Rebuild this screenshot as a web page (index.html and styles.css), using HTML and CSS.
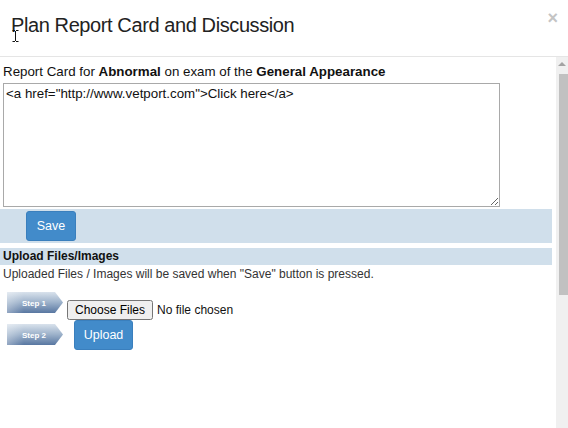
FILE: index.html
```html
<!DOCTYPE html>
<html>
<head>
<meta charset="utf-8">
<link rel="stylesheet" href="styles.css">
</head>
<body>
<div class="modal">
  <div class="modal-header">
    <h4 class="modal-title">Plan Report Card and Discussion</h4>
    <span class="close">×</span>
  </div>
  <div class="modal-body">
    <div class="content">
      <div class="label">Report Card for <b>Abnormal</b> on exam of the <b>General Appearance</b></div>
      <textarea class="report">&lt;a href="http://www.vetport.com"&gt;Click here&lt;/a&gt;</textarea>
      <div class="save-bar"><button class="btn btn-save">Save</button></div>
      <div class="section-head">Upload Files/Images</div>
      <div class="note">Uploaded Files / Images will be saved when "Save" button is pressed.</div>
      <div class="step-row row1">
        <svg class="step" width="56" height="21" viewBox="0 0 56 21">
          <defs>
            <linearGradient id="g1" x1="0" y1="0" x2="0" y2="1">
              <stop offset="0" stop-color="#d9e2ec"/>
              <stop offset="0.5" stop-color="#9cb1ca"/>
              <stop offset="1" stop-color="#5877a1"/>
            </linearGradient>
            <linearGradient id="h1" x1="0" y1="0" x2="1" y2="0">
              <stop offset="0" stop-color="#ffffff" stop-opacity="0.35"/>
              <stop offset="0.3" stop-color="#ffffff" stop-opacity="0"/>
            </linearGradient>
          </defs>
          <polygon points="0,0 48,0 56,10.5 48,21 0,21" fill="url(#g1)"/>
          <polygon points="0,0 48,0 56,10.5 48,21 0,21" fill="url(#h1)"/>
          <text x="27" y="13.5" class="step-text">Step 1</text>
        </svg>
        <input class="file" type="file" multiple>
      </div>
      <div class="step-row row2">
        <svg class="step" width="56" height="21" viewBox="0 0 56 21">
          <polygon points="0,0 48,0 56,10.5 48,21 0,21" fill="url(#g1)"/>
          <polygon points="0,0 48,0 56,10.5 48,21 0,21" fill="url(#h1)"/>
          <text x="27" y="13.5" class="step-text">Step 2</text>
        </svg>
        <button class="btn btn-upload">Upload</button>
      </div>
    </div>
    <div class="scrollbar">
      <div class="sb-arrow"></div>
      <div class="sb-thumb"></div>
    </div>
  </div>
  <svg class="cursor" width="7" height="12" viewBox="0 0 7 12">
    <path d="M0.5 0.5h2.5M4 0.5h2.5M3.5 1v10M0.5 11.5h2.5M4 11.5h2.5" stroke="#111" stroke-width="1" fill="none"/>
  </svg>
</div>
</body>
</html>
```

FILE: styles.css
```css
html, body {
  margin: 0;
  padding: 0;
  background: #fff;
}
body {
  font-family: "Liberation Sans", Arial, sans-serif;
  font-size: 12px;
  color: #222;
}
.modal {
  position: relative;
  width: 568px;
  height: 428px;
  overflow: hidden;
}
.modal-header {
  height: 56px;
  border-bottom: 1px solid #e5e5e5;
  display: flex;
  align-items: flex-start;
  justify-content: space-between;
}
.modal-title {
  margin: 0;
  padding: 13px 0 0 11px;
  font-size: 20px;
  font-weight: normal;
  letter-spacing: -0.4px;
  line-height: 24px;
  color: #222;
}
.close {
  font-size: 18px;
  font-weight: bold;
  line-height: 18px;
  color: #c4c4c4;
  margin: 9px 10px 0 0;
}
.modal-body {
  display: flex;
  height: 371px;
}
.content {
  width: 552px;
  margin-right: 4px;
}
.label {
  padding: 7px 0 0 3px;
  font-size: 13.3333px;
  line-height: 16px;
  height: 16px;
  color: #111;
}
.report {
  display: block;
  box-sizing: border-box;
  margin: 3px 0 0 3px;
  width: 497px;
  height: 124px;
  border: 1px solid #a9a9a9;
  padding: 2px;
  font-family: "Liberation Sans", Arial, sans-serif;
  font-size: 13.3333px;
  line-height: 16px;
  color: #111;
  resize: both;
}
.save-bar {
  margin-top: 2px;
  height: 34px;
  box-sizing: border-box;
  padding: 2px 0 0 26px;
  background: #d0dfeb;
}
.btn {
  border: 1px solid #3a7fbd;
  border-radius: 3px;
  background: #428bca;
  color: #fff;
  font-family: "Liberation Sans", Arial, sans-serif;
  font-size: 12.5px;
  padding: 0;
}
.btn-save {
  width: 50px;
  height: 30px;
}
.section-head {
  margin-top: 5px;
  height: 17px;
  line-height: 17px;
  padding-left: 3px;
  background: #d0dfeb;
  font-weight: bold;
  color: #111;
}
.note {
  margin-top: 2px;
  padding-left: 3px;
  line-height: 14px;
  color: #333;
}
.step-row {
  display: flex;
}
.row1 {
  margin-top: 11px;
  height: 28px;
}
.row1 .step {
  margin-left: 7px;
  align-self: flex-start;
}
.file {
  align-self: flex-end;
  margin-left: 4px;
  font-family: "Liberation Sans", Arial, sans-serif;
  font-size: 12px;
  color: #111;
}
.row2 {
  height: 30px;
}
.row2 .step {
  margin: 4px 0 0 7px;
}
.btn-upload {
  margin-left: 11px;
  width: 59px;
  height: 30px;
}
.step-text {
  font-family: "Liberation Sans", Arial, sans-serif;
  font-size: 8px;
  font-weight: bold;
  fill: #fff;
  text-anchor: middle;
}
.scrollbar {
  width: 12px;
  background: #f0f0f0;
  display: flex;
  flex-direction: column;
  align-items: flex-end;
}
.sb-arrow {
  width: 0;
  height: 0;
  margin: 5px 2px 0 0;
  border-left: 4px solid transparent;
  border-right: 4px solid transparent;
  border-bottom: 4px solid #a3a3a3;
}
.sb-thumb {
  margin-top: 8px;
  width: 9px;
  height: 221px;
  background: #c1c1c1;
}
.cursor {
  position: absolute;
  left: 12px;
  top: 30px;
}
```
